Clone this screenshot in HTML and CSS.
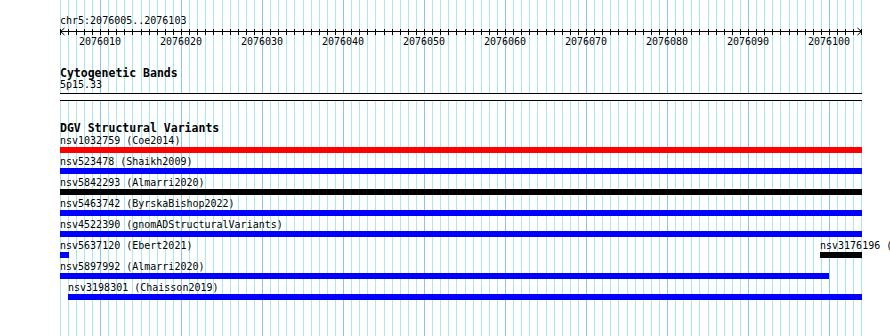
FILE: index.html
```html
<!DOCTYPE html>
<html>
<head>
<meta charset="utf-8">
<link rel="stylesheet" href="styles.css">
</head>
<body>
<div class="view">
  <div class="grid" id="grid"></div>
  <div class="content">
    <div class="locus">chr5:2076005..2076103</div>
    <svg class="ruler" id="ruler" width="802" height="9" viewBox="0 0 802 9">
      <line x1="0" y1="4.5" x2="802" y2="4.5" stroke="#000" stroke-width="1"/>
      <polyline points="4.5,1 0.5,4.5 4.5,8" fill="none" stroke="#000" stroke-width="1"/>
      <polyline points="797.5,1 801.5,4.5 797.5,8" fill="none" stroke="#000" stroke-width="1"/>
    </svg>
    <div class="ruler-labels">
      <span class="ruler-label" style="left:40px">2076010</span>
      <span class="ruler-label" style="left:121px">2076020</span>
      <span class="ruler-label" style="left:202px">2076030</span>
      <span class="ruler-label" style="left:283px">2076040</span>
      <span class="ruler-label" style="left:364px">2076050</span>
      <span class="ruler-label" style="left:445px">2076060</span>
      <span class="ruler-label" style="left:526px">2076070</span>
      <span class="ruler-label" style="left:607px">2076080</span>
      <span class="ruler-label" style="left:688px">2076090</span>
      <span class="ruler-label" style="left:769px">2076100</span>
    </div>

    <div class="track-label cyto-label">Cytogenetic Bands</div>
    <div class="band-name">5p15.33</div>
    <div class="band"></div>

    <div class="track-label dgv-label">DGV Structural Variants</div>
    <div class="rows">
      <div class="row">
        <div class="feature" style="left:0;width:802px"><div class="feature-label">nsv1032759 (Coe2014)</div><div class="feature-bar red"></div></div>
      </div>
      <div class="row">
        <div class="feature" style="left:0;width:802px"><div class="feature-label">nsv523478 (Shaikh2009)</div><div class="feature-bar blue"></div></div>
      </div>
      <div class="row">
        <div class="feature" style="left:0;width:802px"><div class="feature-label">nsv5842293 (Almarri2020)</div><div class="feature-bar black"></div></div>
      </div>
      <div class="row">
        <div class="feature" style="left:0;width:802px"><div class="feature-label">nsv5463742 (ByrskaBishop2022)</div><div class="feature-bar blue"></div></div>
      </div>
      <div class="row">
        <div class="feature" style="left:0;width:802px"><div class="feature-label">nsv4522390 (gnomADStructuralVariants)</div><div class="feature-bar blue"></div></div>
      </div>
      <div class="row">
        <div class="feature" style="left:0;width:9px"><div class="feature-label">nsv5637120 (Ebert2021)</div><div class="feature-bar blue"></div></div>
        <div class="feature" style="left:760px;width:42px"><div class="feature-label">nsv3176196 (Collins2017)</div><div class="feature-bar black"></div></div>
      </div>
      <div class="row">
        <div class="feature" style="left:0;width:769px"><div class="feature-label">nsv5897992 (Almarri2020)</div><div class="feature-bar blue"></div></div>
      </div>
      <div class="row">
        <div class="feature" style="left:8px;width:794px"><div class="feature-label">nsv3198301 (Chaisson2019)</div><div class="feature-bar blue"></div></div>
      </div>
    </div>
  </div>
</div>
<script src="script.js"></script>
</body>
</html>
```

FILE: styles.css
```css
html, body {
  margin: 0;
  padding: 0;
  background: #fff;
}
body {
  width: 890px;
  height: 336px;
  overflow: hidden;
  font-family: "DejaVu Sans Mono", monospace;
  font-size: 10px;
  color: #000;
}
.view {
  position: relative;
  height: 336px;
}
.grid {
  position: absolute;
  left: 60px;
  top: 0;
  bottom: 0;
  width: 802px;
}
.gridline {
  position: absolute;
  top: 0;
  bottom: 0;
  width: 1px;
  background: #aae8f0;
}
.gridline.major {
  background: #88c6ee;
}
.content {
  position: relative;
  margin-left: 60px;
  width: 802px;
}
.locus {
  padding-top: 15px;
  height: 12px;
  line-height: 12px;
  white-space: nowrap;
}
.ruler {
  display: block;
  width: 802px;
  height: 9px;
}
.ruler-labels {
  position: relative;
  height: 12px;
  line-height: 12px;
}
.ruler-label {
  position: absolute;
  top: 0;
  transform: translateX(-50%);
  white-space: nowrap;
}
.track-label {
  font-weight: bold;
  font-size: 11.5px;
  line-height: 12px;
  white-space: nowrap;
}
.cyto-label {
  margin-top: 19px;
}
.band-name {
  line-height: 12px;
}
.band {
  margin-top: 2px;
  height: 6px;
  border-top: 1px solid #000;
  border-bottom: 1px solid #000;
  background: #fff;
}
.dgv-label {
  margin-top: 21px;
}
.row {
  position: relative;
  height: 21px;
}
.feature {
  position: absolute;
  top: 0;
}
.feature-label {
  line-height: 13px;
  height: 13px;
  white-space: nowrap;
}
.feature-bar {
  height: 6px;
}
.red { background: #ff0000; }
.blue { background: #0000ff; }
.black { background: #000000; }
```

FILE: script.js
```js
(function () {
  var grid = document.getElementById('grid');
  var ruler = document.getElementById('ruler');
  var ns = 'http://www.w3.org/2000/svg';
  for (var k = 0; k < 100; k++) {
    var x = Math.round((595 + 81 * k) / 10) - 60;
    var d = document.createElement('div');
    d.className = 'gridline' + ((k + 5) % 10 === 0 ? ' major' : '');
    d.style.left = x + 'px';
    grid.appendChild(d);
    var t = document.createElementNS(ns, 'line');
    t.setAttribute('x1', x + 0.5);
    t.setAttribute('x2', x + 0.5);
    t.setAttribute('y1', 2);
    t.setAttribute('y2', 8);
    t.setAttribute('stroke', '#000');
    t.setAttribute('stroke-width', '1');
    ruler.appendChild(t);
  }
})();
```
